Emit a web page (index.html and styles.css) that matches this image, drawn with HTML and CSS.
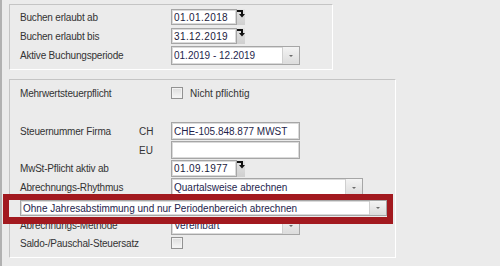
FILE: index.html
```html
<!DOCTYPE html>
<html lang="de">
<head>
    <meta charset="UTF-8">
    <title>Buchungseinstellungen</title>
    <link rel="stylesheet" href="styles.css">
</head>
<body>
    <div class="window">
        <div class="panel panel-period">
            <div class="row r1">
                <span class="label">Buchen erlaubt ab</span>
                <div class="date"><span class="value">01.01.2018</span></div>
                <span class="spin"><svg width="8" height="15" viewBox="0 0 8 15"><path d="M0 2h5v3" fill="none" stroke="#111" stroke-width="2"/><path d="M2 5h6l-3 3.5z" fill="#111"/></svg></span>
            </div>
            <div class="row r2">
                <span class="label">Buchen erlaubt bis</span>
                <div class="date"><span class="value">31.12.2019</span></div>
                <span class="spin"><svg width="8" height="15" viewBox="0 0 8 15"><path d="M0 2h5v3" fill="none" stroke="#111" stroke-width="2"/><path d="M2 5h6l-3 3.5z" fill="#111"/></svg></span>
            </div>
            <div class="row r3">
                <span class="label">Aktive Buchungsperiode</span>
                <div class="combo w129"><span class="value">01.2019 - 12.2019</span><span class="drop"></span></div>
            </div>
        </div>

        <div class="panel panel-tax">
            <div class="row ra">
                <span class="label">Mehrwertsteuerpflicht</span>
                <span class="check"></span>
                <span class="check-text">Nicht pflichtig</span>
            </div>
            <div class="row rch">
                <span class="label short">Steuernummer Firma</span>
                <span class="sub">CH</span>
                <div class="field w129"><span class="value">CHE-105.848.877 MWST</span></div>
            </div>
            <div class="row reu">
                <span class="label short"></span>
                <span class="sub">EU</span>
                <div class="field w129"></div>
            </div>
            <div class="row rmw">
                <span class="label">MwSt-Pflicht aktiv ab</span>
                <div class="date"><span class="value">01.09.1977</span></div>
                <span class="spin"><svg width="8" height="15" viewBox="0 0 8 15"><path d="M0 2h5v3" fill="none" stroke="#111" stroke-width="2"/><path d="M2 5h6l-3 3.5z" fill="#111"/></svg></span>
            </div>
            <div class="row rrh">
                <span class="label">Abrechnungs-Rhythmus</span>
                <div class="combo w192"><span class="value">Quartalsweise abrechnen</span><span class="drop"></span></div>
            </div>
            <div class="row rwide">
                <span class="highlight"></span>
                <div class="combo wide"><span class="value">Ohne Jahresabstimmung und nur Periodenbereich abrechnen</span><span class="drop"></span></div>
            </div>
            <div class="row rme">
                <span class="label">Abrechnungs-Methode</span>
                <div class="combo w129"><span class="value">Vereinbart</span><span class="drop"></span></div>
            </div>
            <div class="row rsa">
                <span class="label">Saldo-/Pauschal-Steuersatz</span>
                <span class="check"></span>
            </div>
        </div>
    </div>
</body>
</html>
```

FILE: styles.css
```css
body, html {
    margin: 0;
    padding: 0;
    width: 500px;
    height: 266px;
    overflow: hidden;
    background-color: #ebebeb;
    font-family: 'Liberation Sans', Arial, sans-serif;
    font-size: 10px;
    color: #333;
}

.window {
    box-sizing: border-box;
    height: 266px;
    border-left: 2px solid #b1b1b1;
    padding: 4px 0 0 7px;
}

.panel {
    box-sizing: border-box;
    border-top: 1px solid #c4c4c4;
    border-left: 1px solid #c4c4c4;
    border-right: 1px solid #fff;
    border-bottom: 1px solid #fff;
    padding-left: 10px;
}

.panel-period {
    width: 324px;
    height: 66px;
    padding-top: 4px;
}

.panel-tax {
    width: 387px;
    height: 179px;
    margin-top: 9px;
    padding-top: 5px;
}

.row {
    display: flex;
    align-items: stretch;
}

.label {
    width: 151px;
    flex-shrink: 0;
    display: flex;
    align-items: center;
    letter-spacing: -0.2px;
}

.label.short {
    width: 119px;
}

.sub {
    width: 32px;
    display: flex;
    align-items: center;
}

/* row heights */
.r1 { height: 16px; }
.r2 { height: 16px; margin-top: 3px; }
.r3 { height: 19px; margin-top: 2px; }

.ra { height: 16px; align-items: center; }
.rch { height: 18px; margin-top: 21px; }
.reu { height: 18px; margin-top: 1px; }
.rmw { height: 17px; margin-top: 1px; }
.rrh { height: 19px; margin-top: 1px; }
.rwide { height: 16px; margin-top: 3px; position: relative; z-index: 1; }
.rme { height: 19px; margin-top: 0; }
.rsa { height: 14px; margin-top: 1px; align-items: center; }

.date, .field, .combo {
    box-sizing: border-box;
    background: #fff;
    border: 1px solid #a6a6a6;
    box-shadow: inset 0 0 0 1px #dadada;
    display: flex;
    align-items: center;
    color: #1f1f4a;
}

.value {
    padding-left: 2px;
    white-space: nowrap;
    flex: 1;
    overflow: hidden;
}

.date {
    width: 66px;
    letter-spacing: 0.4px;
}

.date .value {
    color: #1a1a3c;
}

.spin {
    width: 8px;
    background: linear-gradient(#e4e4e4, #cfcfcf);
    display: flex;
    align-items: flex-start;
}

.w129 { width: 129px; }
.w192 { width: 192px; }

.combo.wide {
    width: 367px;
    position: relative;
}

.combo .value {
    color: #25254d;
}

.drop {
    width: 16px;
    align-self: stretch;
    background: linear-gradient(#f3f3f3, #dcdcdc);
    border-left: 1px solid #cfcfcf;
    position: relative;
}

.drop::after {
    content: '';
    position: absolute;
    left: 6px;
    top: 50%;
    margin-top: -1px;
    border-left: 2px solid transparent;
    border-right: 2px solid transparent;
    border-top: 2px solid #6b6b6b;
}

.check {
    box-sizing: border-box;
    width: 12px;
    height: 12px;
    border: 1px solid #929292;
    background: linear-gradient(#dcdcdc, #f6f6f6);
    box-shadow: inset 0 0 0 1px #f2f2f2;
}

.check-text {
    margin-left: 7px;
}

.highlight {
    position: absolute;
    left: -17px;
    top: -6px;
    width: 390px;
    height: 30px;
    box-sizing: border-box;
    border: 6px solid #a2191f;
    border-bottom-width: 7px;
    background: #ebebeb;
}
```
